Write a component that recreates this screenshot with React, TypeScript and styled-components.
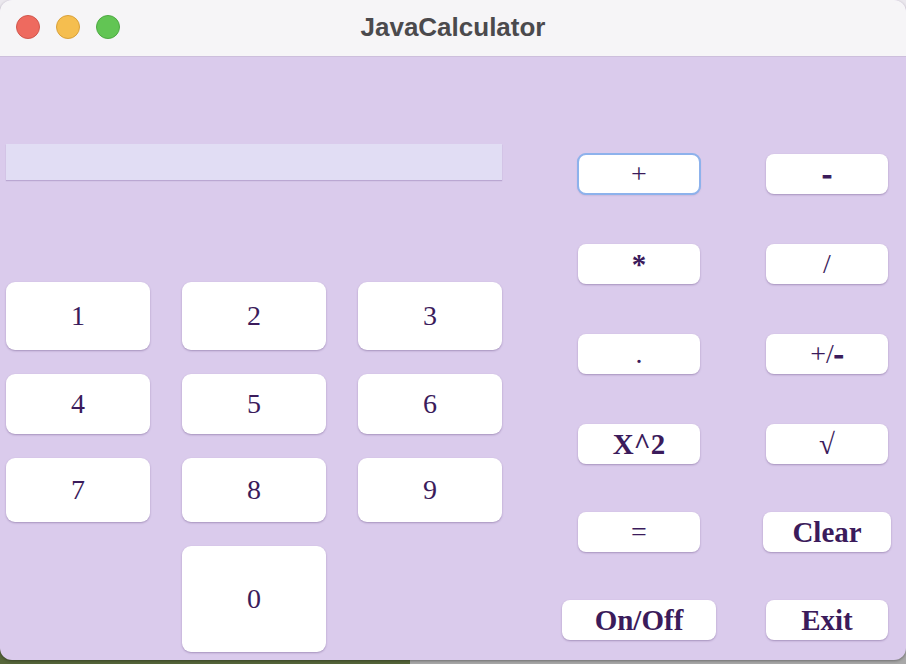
import React from "react";
import styled, { createGlobalStyle } from "styled-components";

const GlobalStyle = createGlobalStyle`
  html, body {
    margin: 0;
    padding: 0;
  }
  body {
    width: 906px;
    height: 664px;
    overflow: hidden;
    background:
      linear-gradient(to bottom, #ebe8ee 0 640px, transparent 640px),
      linear-gradient(to right, #56663a 0 410px, #a8a8a8 410px);
  }
`;

const numberKeys = [
  { label: "1", height: 68 },
  { label: "2", height: 68 },
  { label: "3", height: 68 },
  { label: "4", height: 60 },
  { label: "5", height: 60 },
  { label: "6", height: 60 },
  { label: "7", height: 64 },
  { label: "8", height: 64 },
  { label: "9", height: 64 },
];

interface OpKey {
  label: React.ReactNode;
  width: number;
  bold?: boolean;
  focused?: boolean;
}

function Dash() {
  return <DashStyle>-</DashStyle>;
}

const opKeys: OpKey[] = [
  { label: "+", width: 122, focused: true },
  { label: <Dash />, width: 122 },
  { label: "*", width: 122, bold: true },
  { label: "/", width: 122 },
  { label: ".", width: 122 },
  { label: <>+/<Dash /></>, width: 122 },
  { label: "X^2", width: 122, bold: true },
  { label: "√", width: 122, bold: true },
  { label: "=", width: 122 },
  { label: "Clear", width: 128, bold: true },
  { label: "On/Off", width: 154, bold: true },
  { label: "Exit", width: 122, bold: true },
];

function App() {
  return (
    <>
      <GlobalStyle />
      <Window>
        <TitleBar>
          <Lights>
            <Light color="#ee6a5f" edge="#d1574d" />
            <Light color="#f5be4f" edge="#d9a13a" />
            <Light color="#62c554" edge="#4ea943" />
          </Lights>
          <Title>JavaCalculator</Title>
        </TitleBar>
        <Content>
          <LeftPanel>
            <Display />
            <NumberGrid>
              {numberKeys.map((k) => (
                <NumButton key={k.label} h={k.height}>
                  {k.label}
                </NumButton>
              ))}
              <ZeroButton h={106}>0</ZeroButton>
            </NumberGrid>
          </LeftPanel>
          <RightPanel>
            {opKeys.map((k, i) => (
              <OpButton key={i} w={k.width} bold={k.bold} focused={k.focused}>
                {k.label}
              </OpButton>
            ))}
          </RightPanel>
        </Content>
      </Window>
    </>
  );
}

export default App;

const DashStyle = styled.b`
  font-weight: 900;
  font-size: 30px;
  -webkit-text-stroke: 0.8px #3b1b5b;
`;

const Window = styled.div`
  width: 906px;
  height: 660px;
  border-radius: 12px;
  overflow: hidden;
  display: flex;
  flex-direction: column;
  background: #dacbec;
  box-shadow: 0 1px 3px rgba(0, 0, 0, 0.35);
`;

const TitleBar = styled.div`
  height: 56px;
  flex-shrink: 0;
  display: flex;
  align-items: center;
  position: relative;
  background: #f6f5f7;
  border-bottom: 1px solid #cdbfdc;
`;

const Lights = styled.div`
  display: flex;
  gap: 16px;
  padding-left: 16px;
  margin-top: -2px;
`;

const Light = styled.span<{ color: string; edge: string }>`
  width: 24px;
  height: 24px;
  border-radius: 50%;
  box-sizing: border-box;
  background: ${({ color }) => color};
  border: 1px solid ${({ edge }) => edge};
`;

const Title = styled.div`
  position: absolute;
  left: 0;
  right: 0;
  top: 0;
  bottom: 0;
  display: flex;
  align-items: center;
  justify-content: center;
  padding-bottom: 2px;
  font-family: "Liberation Sans", Arial, sans-serif;
  font-weight: 700;
  font-size: 26px;
  color: #4b4a4d;
  pointer-events: none;
`;

const Content = styled.div`
  flex: 1;
  display: flex;
  padding-left: 6px;
  gap: 60px;
`;

const LeftPanel = styled.div`
  width: 496px;
  padding-top: 87px;
  display: flex;
  flex-direction: column;
  gap: 102px;
`;

const Display = styled.div`
  height: 36px;
  background: #e1ddf4;
  box-shadow: 0 1px 1px rgba(90, 60, 130, 0.25);
`;

const NumberGrid = styled.div`
  display: grid;
  grid-template-columns: repeat(3, 144px);
  column-gap: 32px;
  row-gap: 24px;
`;

const KeyBase = styled.button`
  border: none;
  margin: 0;
  padding: 0;
  background: #ffffff;
  color: #3b1b5b;
  font-family: "Liberation Serif", "Times New Roman", serif;
  display: flex;
  align-items: center;
  justify-content: center;
  box-shadow: 0 1px 2px rgba(70, 40, 100, 0.35);
  cursor: pointer;
`;

const NumButton = styled(KeyBase)<{ h: number }>`
  height: ${({ h }) => h}px;
  border-radius: 9px;
  font-size: 28px;
`;

const ZeroButton = styled(NumButton)`
  grid-column: 2;
`;

const RightPanel = styled.div`
  width: 342px;
  padding-top: 97px;
  display: grid;
  grid-template-columns: 154px 154px;
  column-gap: 34px;
  grid-template-rows: 90px 90px 90px 88px 88px 40px;
  justify-items: center;
  align-items: start;
`;

const OpButton = styled(KeyBase)<{ w: number; bold?: boolean; focused?: boolean }>`
  width: ${({ w }) => w}px;
  height: 40px;
  border-radius: 8px;
  font-size: ${({ bold }) => (bold ? "29px" : "28px")};
  font-weight: ${({ bold }) => (bold ? 700 : 400)};
  ${({ focused }) =>
    focused &&
    `
    outline: 2px solid #8db2ec;
    outline-offset: -1px;
    box-shadow: 0 0 0 1px rgba(141, 178, 236, 0.5), 0 1px 2px rgba(70, 40, 100, 0.3);
  `}
`;
